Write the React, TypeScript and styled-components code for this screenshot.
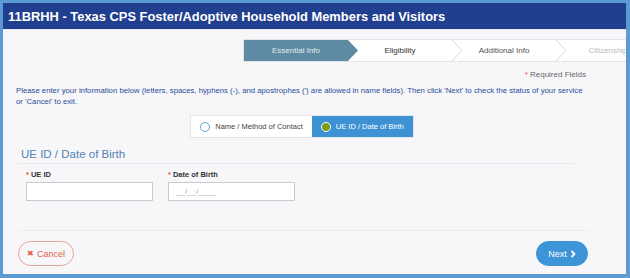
import styled, { createGlobalStyle } from 'styled-components';

const GlobalStyle = createGlobalStyle`
  body {
    margin: 0;
    font-family: "Liberation Sans", Arial, sans-serif;
  }
`;

const Frame = styled.div`
  width: 630px;
  height: 278px;
  box-sizing: border-box;
  border: solid #5b9bd5;
  border-width: 3px 4px 4px 3px;
  background: #f7f7f9;
  display: flex;
  flex-direction: column;
  overflow: hidden;
`;

const Header = styled.div`
  height: 26px;
  flex-shrink: 0;
  background: #213f8f;
  border-bottom: 1px solid #e3e8f1;
  color: #fff;
  font-weight: bold;
  font-size: 12.9px;
  display: flex;
  align-items: center;
  padding-left: 5px;
`;

const Body = styled.div`
  display: flex;
  flex-direction: column;
  padding: 0 38px 0 13px;
`;

const StepperRow = styled.div`
  display: flex;
  margin: 9px 0 0 227px;
  width: max-content;
`;

const Stepper = styled.div`
  display: flex;
  background: #fff;
  border: 1px solid #e2e4e8;
  height: 21px;
`;

const Step = styled.div<{ $active?: boolean; $tone: string }>`
  position: relative;
  width: 104px;
  display: flex;
  align-items: center;
  justify-content: center;
  font-size: 8px;
  color: ${p => p.$tone};
  background: ${p => (p.$active ? '#5f8aa3' : 'transparent')};
  z-index: ${p => (p.$active ? 2 : 1)};
`;

const StepArrow = styled.svg`
  position: absolute;
  top: 0;
  right: -10px;
  width: 10px;
  height: 21px;
`;

const Required = styled.div`
  margin-top: 8px;
  text-align: right;
  font-size: 8px;
  color: #666;
  padding-right: 2px;
`;

const Star = styled.span`
  color: #e04b3c;
  margin-right: 2px;
`;

const Intro = styled.p`
  margin: 6px 0 0;
  font-size: 7.75px;
  line-height: 11px;
  color: #2a4b9b;
`;

const Toggle = styled.div`
  align-self: center;
  display: flex;
  margin-top: 8px;
  height: 21px;
  border: 1px solid #e4e6ea;
`;

const ToggleOption = styled.div<{ $on?: boolean }>`
  display: flex;
  align-items: center;
  gap: 5px;
  padding: 0 9px;
  font-size: 7.5px;
  background: ${p => (p.$on ? '#3d92d3' : '#fff')};
  color: ${p => (p.$on ? '#fff' : '#444')};
`;

const Radio = styled.span<{ $on?: boolean }>`
  width: 8px;
  height: 8px;
  border-radius: 50%;
  border: 1.5px solid ${p => (p.$on ? '#fff' : '#5aa3d6')};
  background: ${p => (p.$on ? '#7d9a17' : '#fff')};
`;

const Section = styled.div`
  margin: 10px 14px 0 2px;
`;

const SectionTitle = styled.div`
  font-size: 11.5px;
  color: #4f82b6;
  padding: 0 0 3px 3px;
  border-bottom: 1px solid #e8e9ec;
`;

const Fields = styled.div`
  display: flex;
  gap: 15px;
  padding: 6px 0 0 8px;
`;

const Field = styled.div`
  display: flex;
  flex-direction: column;
  gap: 3px;
`;

const Label = styled.label`
  font-size: 7.5px;
  font-weight: bold;
  color: #333;
`;

const Input = styled.input`
  box-sizing: border-box;
  width: 127px;
  height: 19px;
  border: 1px solid #c9cbcf;
  background: #fff;
  font-size: 8px;
  padding: 0 7px;
  outline: none;
  &::placeholder {
    color: #aaa;
  }
`;

const Footer = styled.div`
  margin: 29px 0 0 2px;
  border-top: 1px solid #ececef;
  padding-top: 10px;
  display: flex;
  justify-content: space-between;
`;

const Pill = styled.button<{ $primary?: boolean }>`
  height: 25px;
  border-radius: 13px;
  padding: 0;
  font-family: inherit;
  font-size: 9px;
  display: flex;
  align-items: center;
  justify-content: center;
  gap: 3px;
  border: 1px solid ${p => (p.$primary ? '#3d94d6' : '#e9a494')};
  background: ${p => (p.$primary ? '#3d94d6' : 'transparent')};
  color: ${p => (p.$primary ? '#fff' : '#e2604c')};
  width: ${p => (p.$primary ? '52px' : '56px')};
`;

const CancelMark = styled.span`
  font-size: 8px;
`;

const steps = [
  { label: 'Essential Info', tone: '#e4ecf1', active: true },
  { label: 'Eligibility', tone: '#333' },
  { label: 'Additional Info', tone: '#555' },
  { label: 'Citizenship', tone: '#bbb' },
];

export default function App() {
  return (
    <>
      <GlobalStyle />
      <Frame>
        <Header>11BRHH - Texas CPS Foster/Adoptive Household Members and Visitors</Header>
        <Body>
          <StepperRow>
            <Stepper>
              {steps.map(s => (
                <Step key={s.label} $active={s.active} $tone={s.tone}>
                  {s.label}
                  <StepArrow viewBox="0 0 10 21">
                    {s.active ? (
                      <polygon points="0,0 10,10.5 0,21" fill="#5f8aa3" />
                    ) : (
                      <polyline points="0,0 10,10.5 0,21" fill="#fff" stroke="#c8ccd2" strokeWidth="0.8" />
                    )}
                  </StepArrow>
                </Step>
              ))}
            </Stepper>
          </StepperRow>
          <Required>
            <Star>*</Star>Required Fields
          </Required>
          <Intro>
            Please enter your information below (letters, spaces, hyphens (-), and apostrophes (') are allowed in
            name fields). Then click 'Next' to check the status of your service or 'Cancel' to exit.
          </Intro>
          <Toggle>
            <ToggleOption>
              <Radio />
              Name / Method of Contact
            </ToggleOption>
            <ToggleOption $on>
              <Radio $on />
              UE ID / Date of Birth
            </ToggleOption>
          </Toggle>
          <Section>
            <SectionTitle>UE ID / Date of Birth</SectionTitle>
            <Fields>
              <Field>
                <Label>
                  <Star>*</Star>UE ID
                </Label>
                <Input />
              </Field>
              <Field>
                <Label>
                  <Star>*</Star>Date of Birth
                </Label>
                <Input placeholder="__/__/____" />
              </Field>
            </Fields>
          </Section>
          <Footer>
            <Pill>
              <CancelMark>✖</CancelMark>Cancel
            </Pill>
            <Pill $primary>
              Next
              <svg width="6" height="8" viewBox="0 0 6 8">
                <polyline points="1.5,1 4.5,4 1.5,7" fill="none" stroke="#fff" strokeWidth="1.8" />
              </svg>
            </Pill>
          </Footer>
        </Body>
      </Frame>
    </>
  );
}
